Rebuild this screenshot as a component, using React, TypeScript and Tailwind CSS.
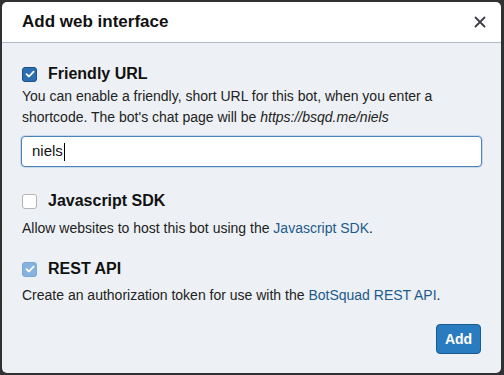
import React from 'react';

const font = { fontFamily: '"Liberation Sans", Arial, Helvetica, sans-serif' };

type BoxKind = 'on' | 'off' | 'disabled';

const Checkbox: React.FC<{ kind: BoxKind }> = ({ kind }) => {
  const cls =
    kind === 'on'
      ? 'bg-[#2b6fb2] border-[#1c4f82]'
      : kind === 'disabled'
      ? 'bg-[#85b3de] border-[#7aa9d6]'
      : 'bg-white border-[#b4b4b4]';
  return (
    <span className={`w-[15px] h-[15px] rounded-[3px] border flex items-center justify-center shrink-0 ${cls}`}>
      {kind !== 'off' && (
        <svg width="10" height="8" viewBox="0 0 10 8" fill="none">
          <path d="M1.5 4.2 L4 6.5 L8.6 1.6" stroke="white" strokeWidth="1.8" strokeLinecap="round" strokeLinejoin="round" />
        </svg>
      )}
    </span>
  );
};

const Option: React.FC<{ kind: BoxKind; label: string }> = ({ kind, label }) => (
  <label className="flex items-center h-6 gap-[11px] pl-px">
    <Checkbox kind={kind} />
    <span className="text-[16px] font-bold text-[#111]">{label}</span>
  </label>
);

export default function App() {
  return (
    <div className="w-[504px] h-[375px] bg-[#313131] pt-[2px] pl-[2px]" style={font}>
      <div className="w-[499px] h-[371px] rounded-[5px] overflow-hidden flex flex-col">
        <div className="h-[41px] bg-white border-b border-[#b3b9c2] flex items-center justify-between pl-[20px] pr-[15px] shrink-0">
          <h1 className="text-[17px] font-bold text-[#111]">Add web interface</h1>
          <svg width="12" height="12" viewBox="0 0 12 12">
            <path d="M1.5 1.5 L10.5 10.5 M10.5 1.5 L1.5 10.5" stroke="#3a3f45" strokeWidth="1.8" strokeLinecap="round" />
          </svg>
        </div>
        <div className="flex-1 bg-[#edf1f5] px-[19px] pt-[19px] text-[14px] text-[#222] flex flex-col">
          <Option kind="on" label="Friendly URL" />
          <p className="leading-[21px] pl-px">
            You can enable a friendly, short URL for this bot, when you enter a shortcode. The bot's chat page will be{' '}
            <em>https://bsqd.me/niels</em>
          </p>
          <div className="mt-2 h-[31px] bg-white border border-[#4f82b6] rounded-[4px] shadow-[0_0_0_1px_rgba(90,140,200,0.25)] flex items-center pl-[10px] text-[15px] text-[#111]">
            niels<span className="inline-block w-px h-[18px] bg-black ml-px" />
          </div>

          <div className="mt-[22px]">
            <Option kind="off" label="Javascript SDK" />
          </div>
          <p className="leading-[21px] mt-[5px] pl-px">
            Allow websites to host this bot using the <span className="text-[#1d5a8c]">Javascript SDK</span>.
          </p>

          <div className="mt-[18px]">
            <Option kind="disabled" label="REST API" />
          </div>
          <p className="leading-[21px] mt-[4px] pl-px">
            Create an authorization token for use with the <span className="text-[#1d5a8c]">BotSquad REST API</span>.
          </p>

          <div className="flex justify-end mt-[18px] pr-px">
            <button className="w-[45px] h-[30px] rounded-[4px] bg-[#2a7cc0] border border-[#1b5a8f] text-white text-[14px] font-bold">
              Add
            </button>
          </div>
        </div>
      </div>
    </div>
  );
}
